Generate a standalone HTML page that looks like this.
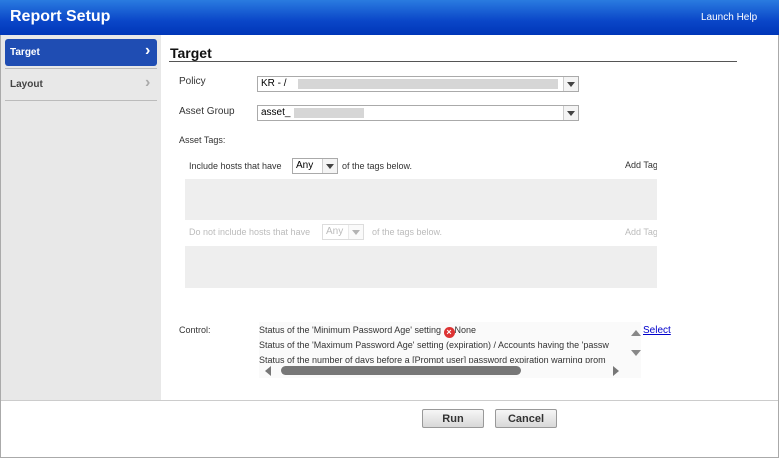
<!DOCTYPE html><html><head><style>
body{margin:0;width:779px;height:458px;overflow:hidden;font-family:"Liberation Sans",sans-serif;font-size:10px;color:#333;background:#fff;position:relative}
.a{position:absolute}
.sel{position:absolute;border:1px solid #aaa;background:#fff;height:16px;box-sizing:border-box;font-size:10px;line-height:14px;padding-left:3px;color:#000}
.sel .ar{position:absolute;right:0;top:0;width:14px;height:14px;border-left:1px solid #ccc;background:#f4f4f4}
.sel .ar:after{content:"";position:absolute;left:3px;top:5px;border:4px solid transparent;border-top:5px solid #444;border-bottom:0}
.blur{position:absolute;background:#d6d6d6;height:10px;top:2px}
.btn{position:absolute;top:409px;height:19px;border:1px solid #999;border-radius:2px;background:linear-gradient(#f6f6f6,#d8d8d8);font-weight:bold;font-size:11px;text-align:center;line-height:19px;color:#333;box-sizing:border-box}
</style></head><body>
<div class="a" style="left:0;top:0;width:779px;height:458px;border:1px solid #aaa;box-sizing:border-box"></div>
<div class="a" style="left:0;top:0;width:779px;height:35px;background:linear-gradient(#2a7be0,#0a46c8 60%,#0036b8)"></div>
<div class="a" style="left:10px;top:8px;color:#fff;font-weight:bold;font-size:16px">Report Setup</div>
<div class="a" style="left:701px;top:12px;color:#fff;font-size:10px">Launch Help</div>
<div class="a" style="left:1px;top:35px;width:160px;height:365px;background:#e8e8e8"></div>
<div class="a" style="left:5px;top:39px;width:152px;height:27px;background:#1f4db3;border-radius:3px"></div>
<div class="a" style="left:10px;top:47px;color:#fff;font-weight:bold;font-size:10px">Target</div>
<div class="a" style="left:145px;top:42px;color:#fff;font-size:16px;font-weight:bold">›</div>
<div class="a" style="left:5px;top:68px;width:152px;height:1px;background:#bbb"></div>
<div class="a" style="left:10px;top:79px;font-weight:bold;font-size:10px;color:#444">Layout</div>
<div class="a" style="left:145px;top:74px;color:#aaa;font-size:16px;font-weight:bold">›</div>
<div class="a" style="left:5px;top:100px;width:152px;height:1px;background:#bbb"></div>
<div class="a" style="left:170px;top:45px;font-weight:bold;font-size:14px;color:#111">Target</div>
<div class="a" style="left:169px;top:61px;width:568px;height:1px;background:#555"></div>
<div class="a" style="left:179px;top:76px">Policy</div>
<div class="sel" style="left:257px;top:76px;width:322px">KR - /<div class="blur" style="left:40px;width:260px"></div><div class="ar"></div></div>
<div class="a" style="left:179px;top:106px">Asset Group</div>
<div class="sel" style="left:257px;top:105px;width:322px">asset_<div class="blur" style="left:36px;width:70px"></div><div class="ar"></div></div>
<div class="a" style="left:179px;top:135px;font-size:9px">Asset Tags:</div>
<div class="a" style="left:189px;top:161px;font-size:9px">Include hosts that have</div>
<div class="sel" style="left:292px;top:158px;width:46px">Any<div class="ar"></div></div>
<div class="a" style="left:342px;top:161px;font-size:9px">of the tags below.</div>
<div class="a" style="left:625px;top:160px;width:32px;overflow:hidden;white-space:nowrap;font-size:9px">Add Tag</div>
<div class="a" style="left:185px;top:179px;width:472px;height:41px;background:#eee"></div>
<div class="a" style="left:189px;top:227px;font-size:9px;color:#bbb">Do not include hosts that have</div>
<div class="sel" style="left:322px;top:224px;width:42px;color:#bbb;border-color:#ddd">Any<div class="ar" style="opacity:.4"></div></div>
<div class="a" style="left:372px;top:227px;font-size:9px;color:#bbb">of the tags below.</div>
<div class="a" style="left:625px;top:227px;width:32px;overflow:hidden;white-space:nowrap;font-size:9px;color:#bbb">Add Tag</div>
<div class="a" style="left:185px;top:246px;width:472px;height:42px;background:#eee"></div>
<div class="a" style="left:179px;top:325px;font-size:9px">Control:</div>
<div class="a" style="left:259px;top:322px;width:382px;height:56px;background:#fafafa;overflow:hidden;font-size:9px;line-height:15px;white-space:nowrap">
<div style="position:absolute;left:0;top:1px;width:368px;height:40px;overflow:hidden">Status of the 'Minimum Password Age' setting <span style="display:inline-block;width:11px;height:11px;border-radius:50%;background:#d33;color:#fff;font-size:9px;line-height:11px;text-align:center;font-weight:bold;vertical-align:-2px">×</span>None<br>Status of the 'Maximum Password Age' setting (expiration) / Accounts having the 'passw<br>Status of the number of days before a [Prompt user] password expiration warning prom</div>
<div style="position:absolute;left:22px;top:44px;width:240px;height:9px;border-radius:5px;background:#777"></div>
<div style="position:absolute;left:6px;top:44px;border:5px solid transparent;border-right:6px solid #777;border-left:0"></div>
<div style="position:absolute;left:354px;top:44px;border:5px solid transparent;border-left:6px solid #777;border-right:0"></div>
<div style="position:absolute;left:372px;top:8px;border:5px solid transparent;border-bottom:6px solid #888;border-top:0"></div>
<div style="position:absolute;left:372px;top:28px;border:5px solid transparent;border-top:6px solid #888;border-bottom:0"></div>
</div>
<div class="a" style="left:643px;top:325px;font-size:10px;color:#0000cc;text-decoration:underline">Select</div>
<div class="a" style="left:1px;top:400px;width:777px;height:1px;background:#ccc"></div>
<div class="btn" style="left:422px;width:62px">Run</div>
<div class="btn" style="left:495px;width:62px">Cancel</div>
</body></html>
